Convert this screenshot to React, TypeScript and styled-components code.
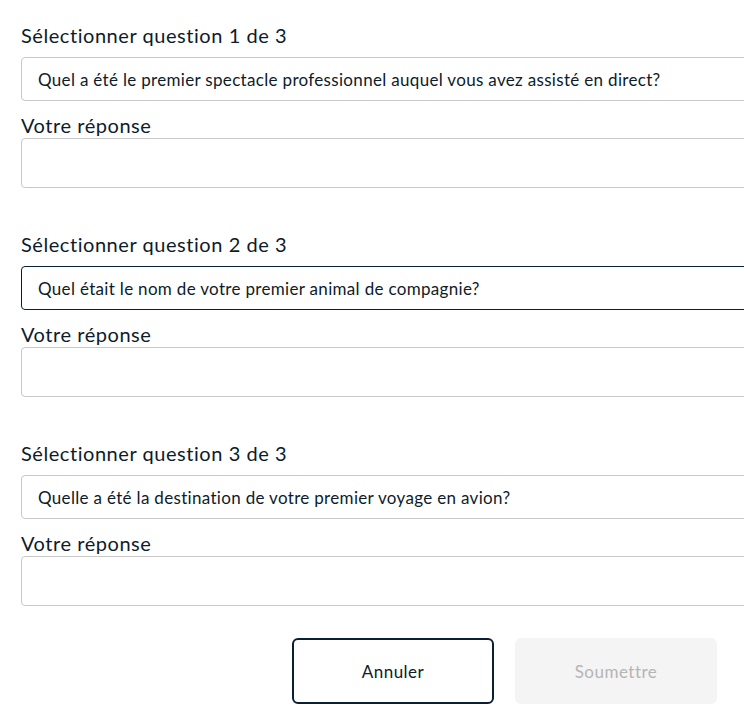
import React, { useState } from 'react';
import styled, { createGlobalStyle } from 'styled-components';

const GlobalStyle = createGlobalStyle`
  html, body {
    margin: 0;
    padding: 0;
    background: #ffffff;
    overflow: hidden;
  }
  body {
    font-family: Lato, "Noto Sans", Arial, sans-serif;
    color: #0d1b2a;
  }
`;

const Page = styled.div`
  padding: 25px 0 0 21px;
`;

const Form = styled.form`
  width: 760px;
  display: flex;
  flex-direction: column;
`;

const QuestionBlock = styled.div<{ $last?: boolean }>`
  display: flex;
  flex-direction: column;
  margin-bottom: ${p => (p.$last ? 32 : 46)}px;
`;

const Label = styled.label<{ $gap: number }>`
  font-size: 20px;
  line-height: 20px;
  letter-spacing: 0.55px;
  color: #0d1b2a;
  margin-bottom: ${p => p.$gap}px;
`;

const Select = styled.select<{ $active?: boolean }>`
  appearance: none;
  -webkit-appearance: none;
  box-sizing: border-box;
  width: 100%;
  height: 44px;
  padding: 0 16px;
  margin-bottom: 14px;
  border: 1px solid ${p => (p.$active ? '#0b1f33' : '#c8c8c8')};
  border-radius: 4px;
  background: #ffffff;
  font-family: inherit;
  font-size: 17px;
  letter-spacing: 0.32px;
  color: #0d1b2a;
  outline: none;
`;

const AnswerInput = styled.input`
  box-sizing: border-box;
  width: 100%;
  height: 50px;
  padding: 0 16px;
  border: 1px solid #c8c8c8;
  border-radius: 4px;
  background: #ffffff;
  font-family: inherit;
  font-size: 17px;
  color: #0d1b2a;
  outline: none;
`;

const ButtonRow = styled.div`
  display: flex;
  justify-content: flex-end;
  gap: 21px;
  padding-right: 64px;
`;

const Button = styled.button<{ $variant: 'outline' | 'disabled' }>`
  box-sizing: border-box;
  width: 202px;
  height: 66px;
  border-radius: 6px;
  font-family: inherit;
  font-size: 17px;
  letter-spacing: 0.5px;
  cursor: ${p => (p.$variant === 'disabled' ? 'default' : 'pointer')};
  border: 2px solid ${p => (p.$variant === 'outline' ? '#0b1f33' : '#f4f4f4')};
  background: ${p => (p.$variant === 'outline' ? '#ffffff' : '#f4f4f4')};
  color: ${p => (p.$variant === 'outline' ? '#0d1b2a' : '#b5b5b5')};
`;

const questions = [
  'Quel a été le premier spectacle professionnel auquel vous avez assisté en direct?',
  'Quel était le nom de votre premier animal de compagnie?',
  'Quelle a été la destination de votre premier voyage en avion?',
];

export default function App() {
  const [answers, setAnswers] = useState(['', '', '']);

  return (
    <Page>
      <GlobalStyle />
      <Form onSubmit={e => e.preventDefault()}>
        {questions.map((q, i) => (
          <QuestionBlock key={i} $last={i === questions.length - 1}>
            <Label $gap={12}>Sélectionner question {i + 1} de 3</Label>
            <Select $active={i === 1} defaultValue={q}>
              <option value={q}>{q}</option>
            </Select>
            <Label $gap={3}>Votre réponse</Label>
            <AnswerInput
              value={answers[i]}
              onChange={e => {
                const next = [...answers];
                next[i] = e.target.value;
                setAnswers(next);
              }}
            />
          </QuestionBlock>
        ))}
        <ButtonRow>
          <Button type="button" $variant="outline">Annuler</Button>
          <Button type="submit" $variant="disabled" disabled>Soumettre</Button>
        </ButtonRow>
      </Form>
    </Page>
  );
}
